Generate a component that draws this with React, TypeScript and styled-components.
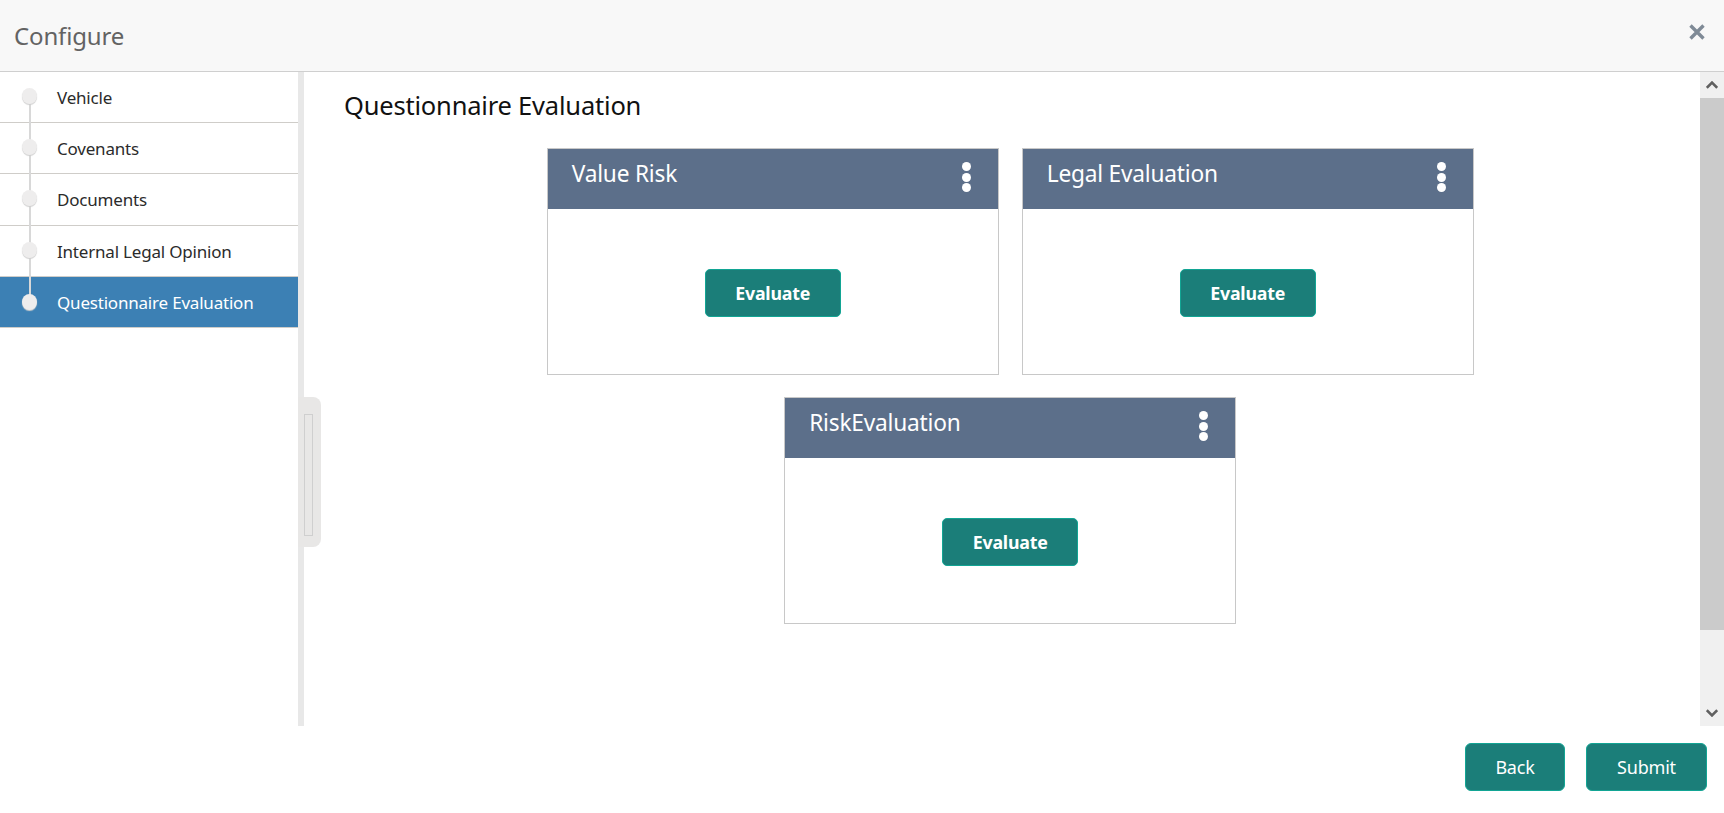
import React from 'react';
import styled, {createGlobalStyle} from 'styled-components';

const steps = ['Vehicle', 'Covenants', 'Documents', 'Internal Legal Opinion', 'Questionnaire Evaluation'];
const cards = ['Value Risk', 'Legal Evaluation', 'RiskEvaluation'];

const GlobalStyle = createGlobalStyle`
    html, body {
        margin: 0;
        padding: 0;
        background: #fff;
        font-family: "Noto Sans", "Open Sans", sans-serif;
    }
    * {
        box-sizing: border-box;
    }
`

const App = () => {
    return (
        <SPage>
            <GlobalStyle/>
            <SHeader>
                <STitle>Configure</STitle>
                <SClose viewBox="0 0 16 16">
                    <path d="M1.5 1.5 L14.5 14.5 M14.5 1.5 L1.5 14.5" stroke="#7f8a96" strokeWidth="3.4"/>
                </SClose>
            </SHeader>
            <SBody>
                <SSidebar>
                    {steps.map((step, i) => (
                        <SStep key={step} $active={i === steps.length - 1} $first={i === 0}>
                            <SDot $active={i === steps.length - 1}/>
                            <SStepLabel>{step}</SStepLabel>
                        </SStep>
                    ))}
                </SSidebar>
                <SHandle>
                    <SHandleGrip/>
                </SHandle>
                <SContent>
                    <SHeading>Questionnaire Evaluation</SHeading>
                    <SCards>
                        {cards.map(card => (
                            <SCard key={card}>
                                <SCardHead>
                                    <SCardTitle>{card}</SCardTitle>
                                    <SKebab>
                                        <i/><i/><i/>
                                    </SKebab>
                                </SCardHead>
                                <SCardBody>
                                    <SEvaluate>Evaluate</SEvaluate>
                                </SCardBody>
                            </SCard>
                        ))}
                    </SCards>
                </SContent>
                <SScrollbar>
                    <SArrow viewBox="0 0 12 8">
                        <path d="M0.8 6.8 L6 1.6 L11.2 6.8" fill="none" stroke="#606060" strokeWidth="2.6"/>
                    </SArrow>
                    <SThumb/>
                    <SArrow viewBox="0 0 12 8">
                        <path d="M0.8 1.2 L6 6.4 L11.2 1.2" fill="none" stroke="#606060" strokeWidth="2.6"/>
                    </SArrow>
                </SScrollbar>
            </SBody>
            <SFooter>
                <SFooterButton $width={100}>Back</SFooterButton>
                <SFooterButton $width={121}>Submit</SFooterButton>
            </SFooter>
        </SPage>
    );
};

export default App;

const SPage = styled.div`
    width: 1724px;
    height: 813px;
    display: flex;
    flex-direction: column;
    overflow: hidden;
    background: #fff;
`
const SHeader = styled.div`
    height: 72px;
    flex: none;
    display: flex;
    align-items: center;
    justify-content: space-between;
    padding: 0 19px 0 14px;
    background: #f8f8f8;
    border-bottom: 1px solid #cfcfcf;
`
const STitle = styled.div`
    font-size: 24px;
    color: #636363;
    letter-spacing: -0.15px;
`
const SClose = styled.svg`
    width: 16px;
    height: 16px;
    margin-top: -8px;
`
const SBody = styled.div`
    position: relative;
    height: 654px;
    flex: none;
    display: flex;
`
const SSidebar = styled.div`
    width: 304px;
    flex: none;
    background: #fff;
    border-right: 6px solid #e8e8e8;
`
const SStep = styled.div<{ $active: boolean, $first: boolean }>`
    position: relative;
    height: ${p => p.$first ? 51 : 51.3}px;
    display: flex;
    align-items: center;
    padding: 1px 0 0 57px;
    color: ${p => p.$active ? '#fff' : '#2b2b2b'};
    background: ${p => p.$active ? '#3c80b4' : 'transparent'};
    border-bottom: 1px solid #cfcdc9;

    &::before {
        content: '';
        position: absolute;
        left: 29px;
        width: 2px;
        top: ${p => p.$first ? 24 : -2}px;
        bottom: ${p => p.$active ? 24 : -2}px;
        background: #d8d8d8;
        z-index: 1;
    }
`
const SDot = styled.span<{ $active: boolean }>`
    position: absolute;
    left: 22px;
    top: ${p => p.$active ? 17 : 16}px;
    width: 15px;
    height: 16px;
    border-radius: 50%;
    background: #eeeded;
    box-shadow: 0 1px 1px #cfcfcf;
    z-index: 2;
`
const SStepLabel = styled.span`
    font-size: 17px;
    letter-spacing: -0.2px;
`
const SHandle = styled.div`
    position: absolute;
    left: 298px;
    top: 325px;
    width: 23px;
    height: 150px;
    padding: 17px 0 0 6px;
    background: #e8e7e6;
    border-radius: 0 8px 8px 0;
`
const SHandleGrip = styled.div`
    width: 9px;
    height: 122px;
    border: 1px solid #cfcfcf;
`
const SContent = styled.div`
    flex: 1;
    min-width: 0;
    padding: 16px 0 0 40px;
`
const SHeading = styled.h1`
    margin: 0 0 25px;
    font-size: 25.5px;
    line-height: 35px;
    font-weight: 400;
    color: #111;
    letter-spacing: -0.2px;
`
const SCards = styled.div`
    width: 927px;
    margin-left: 202.7px;
    display: flex;
    flex-wrap: wrap;
    justify-content: center;
    gap: 22px 23px;
`
const SCard = styled.div`
    width: 452px;
    height: 227px;
    display: flex;
    flex-direction: column;
    border: 1px solid #c8c8c8;
`
const SCardHead = styled.div`
    height: 60px;
    flex: none;
    display: flex;
    justify-content: space-between;
    padding: 9px 27px 0 24px;
    background: #5c6f8a;
    color: #fff;
`
const SCardTitle = styled.div`
    font-size: 22.7px;
    line-height: 31px;
    letter-spacing: -0.2px;
`
const SKebab = styled.div`
    display: flex;
    flex-direction: column;
    gap: 1.5px;
    padding-top: 4px;

    i {
        width: 9px;
        height: 9px;
        border-radius: 50%;
        background: #fff;
    }
`
const SCardBody = styled.div`
    flex: 1;
    display: flex;
    align-items: center;
    justify-content: center;
    padding-top: 2px;
`
const SEvaluate = styled.button`
    width: 136px;
    height: 48px;
    padding: 0;
    border: 1px solid #12a594;
    border-radius: 5px;
    background: #1b7e79;
    color: #fff;
    font-family: inherit;
    font-size: 17.8px;
    font-weight: 700;
    letter-spacing: -0.2px;
`
const SScrollbar = styled.div`
    width: 24px;
    flex: none;
    display: flex;
    flex-direction: column;
    background: #f0f0f0;
`
const SArrow = styled.svg`
    width: 24px;
    height: 26px;
    flex: none;
    padding: 9px 6px;
`
const SThumb = styled.div`
    flex: 1;
    background: #cbcbcb;
    margin-bottom: 70px;
`
const SFooter = styled.div`
    flex: 1;
    display: flex;
    justify-content: flex-end;
    align-items: flex-start;
    gap: 21px;
    padding: 17px 17px 0 0;
`
const SFooterButton = styled.button<{ $width: number }>`
    width: ${p => p.$width}px;
    height: 48px;
    padding: 0;
    border: 1px solid #12a594;
    border-radius: 6px;
    background: #1b7e79;
    color: #fff;
    font-family: inherit;
    font-size: 18px;
    letter-spacing: -0.2px;
`
